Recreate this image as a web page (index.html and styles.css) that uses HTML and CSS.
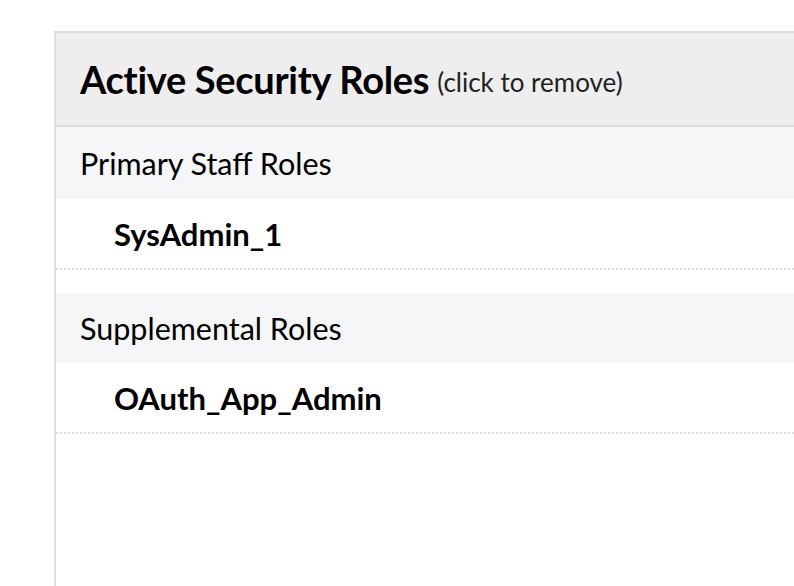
FILE: index.html
```html
<!DOCTYPE html>
<html>
<head>
<meta charset="utf-8">
<link rel="stylesheet" href="styles.css">
</head>
<body>
<div class="panel">
  <div class="panel-header">
    <span class="title">Active Security Roles</span>
    <span class="hint">(click to remove)</span>
  </div>
  <div class="group">
    <div class="group-title first">Primary Staff Roles</div>
    <div class="role">SysAdmin_1</div>
  </div>
  <div class="group">
    <div class="group-title">Supplemental Roles</div>
    <div class="role">OAuth_App_Admin</div>
  </div>
</div>
</body>
</html>
```
FILE: styles.css
```css
html, body {
  margin: 0;
  padding: 0;
  background: #ffffff;
  overflow: hidden;
  height: 586px;
}
body {
  font-family: Lato, "Liberation Sans", sans-serif;
  color: #000;
}
.panel {
  margin: 31px 0 0 54px;
  width: 740px;
  height: 555px;
  border-left: 2px solid #dddddd;
  border-top: 2px solid #dddddd;
  box-sizing: border-box;
}
.panel-header {
  height: 92px;
  background: #eeeeee;
  border-bottom: 2px solid #dddddd;
  display: flex;
  align-items: center;
  padding-left: 24px;
  gap: 8px;
}
.title {
  font-weight: bold;
  font-size: 38px;
  letter-spacing: -0.3px;
}
.hint {
  font-size: 26px;
  color: #222;
  position: relative;
  top: 3px;
}
.group {
  margin-bottom: 23px;
}
.group-title {
  height: 70px;
  background: #f5f6f8;
  display: flex;
  align-items: center;
  padding-left: 24px;
  font-size: 30.5px;
}
.group-title.first {
  height: 72px;
}
.role {
  height: 69px;
  display: flex;
  align-items: center;
  padding-left: 58px;
  font-weight: bold;
  font-size: 31px;
  border-bottom: 2px dotted #dddddd;
}
```
